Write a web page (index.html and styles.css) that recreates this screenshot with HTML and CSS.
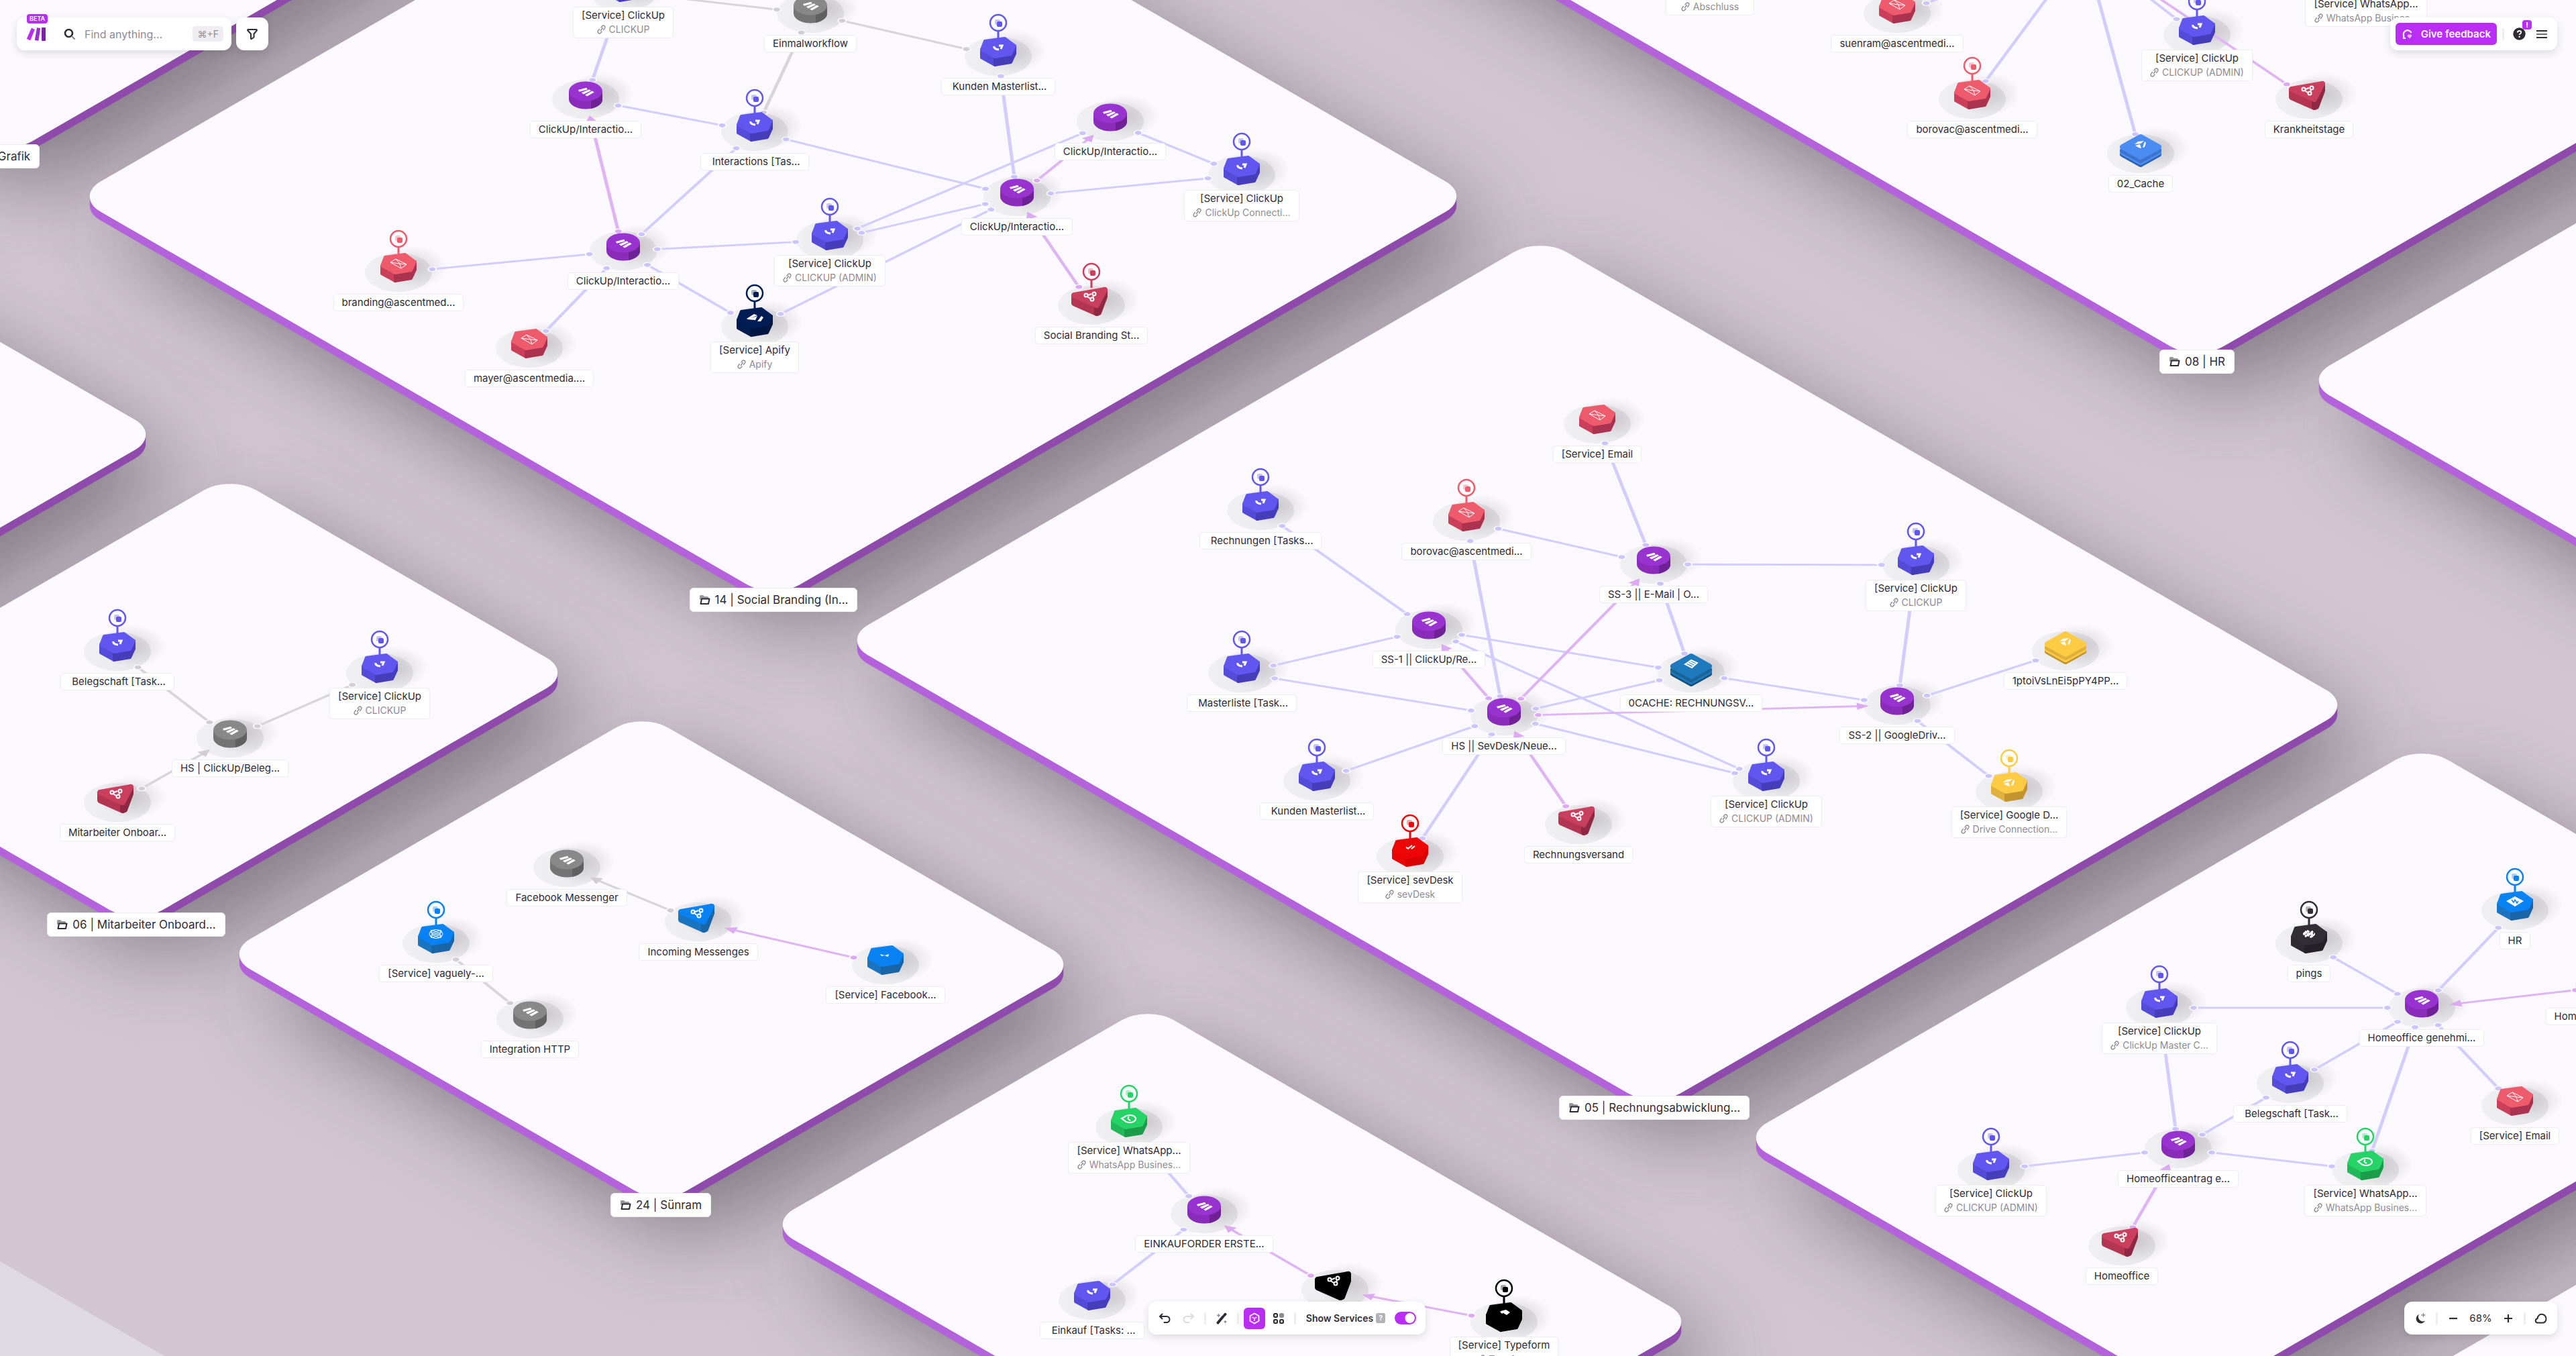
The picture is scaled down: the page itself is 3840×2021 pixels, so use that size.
FILE: index.html
```html
<!DOCTYPE html>
<html lang="en">
<head>
  <meta charset="UTF-8">
  <title>Make Grid</title>
  <link rel="stylesheet" href="styles.css">
</head>
<body>
  <main class="map">
    <svg class="scene" id="scene" aria-hidden="true">
      <defs>
        <filter id="soft" x="-30%" y="-30%" width="160%" height="160%">
          <feGaussianBlur stdDeviation="66"/>
        </filter>
        <radialGradient id="nodeShadow">
          <stop offset="0" stop-color="#55505c" stop-opacity=".22"/>
          <stop offset="1" stop-color="#55505c" stop-opacity="0"/>
        </radialGradient>
        <linearGradient id="disc">
          <stop offset="0" stop-color="#f0eff2"/>
          <stop offset="1" stop-color="#e8e7ea"/>
        </linearGradient>
      </defs>
      <rect class="ground" width="100%" height="100%"/>
      <path class="ground-edge" d="M0 1880L245 2021H0Z"/>
      <g id="shadows"></g>
      <g id="platforms"></g>
      <g id="discs"></g>
      <g id="links"></g>
      <g id="bodies"></g>
    </svg>
    <div id="labels"></div>
  </main>

  <div class="overlay">
    <header class="bar-row">
      <div class="bar-group">
        <div class="panel search">
          <a class="brand" href="#" aria-label="Make">
            <span class="beta">BETA</span>
            <svg width="28" height="20" viewBox="0 0 28 20"><path fill="#b92df5" d="M7 .6l4.900 2.400L5.600 18.400a1 1 0 0 1-1.300.5L.6 17.200a1 1 0 0 1-.4-1.300L7 .6z"/><path fill="#9a2fd0" d="M15 .2l5.200.9-2.700 17.800a1 1 0 0 1-1.200.8l-3.600-.6a1 1 0 0 1-.8-1.200L15 .2z"/><path fill="#7d22ac" d="M22 .8a.8.8 0 0 1 .8-.8H27a1 1 0 0 1 1 1v18a1 1 0 0 1-1 1h-4a1 1 0 0 1-1-1z"/></svg>
          </a>
          <label class="search-icon" for="find">
            <svg width="18" height="18" viewBox="0 0 18 18" fill="none" stroke-linecap="round"><circle cx="7.500" cy="7.500" r="5.500" stroke="#2f2a33" stroke-width="2.600"/><path d="M12.500 12.500L16 16" stroke="#8f8a93" stroke-width="2.400"/></svg>
          </label>
          <input id="find" class="search-input" type="text" placeholder="Find anything..." aria-label="Find anything">
          <kbd class="shortcut">⌘+F</kbd>
        </div>
        <button class="panel filter" type="button" aria-label="Filter">
          <svg width="18" height="18" viewBox="0 0 18 18" fill="none" stroke="#2f2a33" stroke-width="2" stroke-linejoin="round"><path d="M3 2h12c.8 0 1.200.9.700 1.500L11.500 8.500v5L8 16c-.5.300-1 0-1-.5v-7L2.300 3.500C1.800 2.900 2.200 2 3 2z"/></svg>
        </button>
      </div>

      <div class="panel actions">
        <button class="feedback" type="button">
          <svg width="16" height="18" viewBox="0 0 16 18" fill="none"><path d="M5 15H2.200v-3.400A6 6 0 1 1 13.500 7" stroke="#fff" stroke-width="2.200"/><path d="M11 15.500L7.800 12a2 2 0 0 1 3.200-2.200A2 2 0 0 1 14.200 12z" fill="#e7b6fb"/></svg>
          Give feedback
        </button>
        <span class="divider"></span>
        <button class="icon-button help" type="button" aria-label="Help">
          <svg width="19" height="19" viewBox="0 0 19 19"><circle cx="9.500" cy="9.500" r="9.200" fill="#2f2a33"/><path d="M6.800 7.500c.1-1.700 1.200-2.500 2.700-2.500s2.700.9 2.700 2.300c0 1.800-2.600 1.900-2.600 3.700" fill="none" stroke="#fff" stroke-width="1.900"/><circle cx="9.600" cy="13.700" r="1.200" fill="#fff"/></svg>
          <span class="alert">!</span>
        </button>
        <button class="icon-button menu" type="button" aria-label="Menu">
          <svg width="16" height="14" viewBox="0 0 16 14"><path d="M0 2h16M0 12h16" stroke="#2f2a33" stroke-width="2"/><path d="M0 7h16" stroke="#716b75" stroke-width="2"/></svg>
        </button>
      </div>
    </header>

    <footer class="bar-row bar-row-bottom">
      <div class="panel tools">
        <button class="icon-button" type="button" aria-label="Undo">
          <svg width="18" height="18" viewBox="0 0 18 18" fill="none" stroke="#2f2a33" stroke-width="2" stroke-linecap="round" stroke-linejoin="round"><path d="M5.500 2.500L2 6l3.500 3.500"/><path d="M2.500 6H12a4 4 0 0 1 0 9H8.500"/></svg>
        </button>
        <button class="icon-button" type="button" aria-label="Redo" disabled>
          <svg width="18" height="18" viewBox="0 0 18 18" fill="none" stroke="#dcdade" stroke-width="2" stroke-linecap="round" stroke-linejoin="round"><path d="M12.500 2.500L16 6l-3.500 3.500"/><path d="M15.500 6H6a4 4 0 0 0 0 9h3.500"/></svg>
        </button>
        <span class="divider"></span>
        <button class="icon-button" type="button" aria-label="Auto-align">
          <svg width="18" height="18" viewBox="0 0 18 18"><path d="M3.500 15.500L11 6.500" stroke="#2f2a33" stroke-width="4" stroke-linecap="round"/><path d="M13 4.500L14.500 2.800" stroke="#2f2a33" stroke-width="4" stroke-linecap="round"/><path d="M4.500 2v5M2 4.500h5M14.500 12v4M12.500 14h4" stroke="#8f8a93" stroke-width="1.400"/></svg>
        </button>
        <span class="divider"></span>
        <button class="icon-button active" type="button" aria-label="3D view">
          <svg width="18" height="18" viewBox="0 0 18 18" fill="none" stroke="#fff" stroke-width="1.800" stroke-linejoin="round"><path d="M9 1.500l6.500 3.700v7.600L9 16.500l-6.500-3.700V5.200z"/><path d="M5.500 7L9 9l3.500-2M9 9v4" stroke="#eec8fd"/></svg>
        </button>
        <button class="icon-button" type="button" aria-label="2D view">
          <svg width="18" height="18" viewBox="0 0 18 18" fill="none" stroke="#2f2a33" stroke-width="2"><rect x="2" y="2" width="5" height="5" rx="1.500"/><rect x="11" y="2" width="5" height="5" rx="1.500" fill="#8f8a93" stroke="#8f8a93"/><rect x="2" y="11" width="5" height="5" rx="1.500"/><rect x="11" y="11" width="5" height="5" rx="1.500"/></svg>
        </button>
        <span class="divider"></span>
        <label class="switch-label" for="services">Show Services</label>
        <span class="hint">?</span>
        <input id="services" class="switch" type="checkbox" checked>
      </div>

      <div class="panel zoom">
        <button class="icon-button" type="button" aria-label="Dark mode">
          <svg width="18" height="18" viewBox="0 0 18 18"><path d="M7 3a7 7 0 1 0 9 9.500A6.800 6.800 0 0 1 7 3z" fill="#2f2a33"/><path d="M13.500 1v6M10.500 4h6" stroke="#8f8a93" stroke-width="1.400"/></svg>
        </button>
        <span class="divider"></span>
        <button class="icon-button" type="button" aria-label="Zoom out">
          <svg width="14" height="14" viewBox="0 0 14 14"><path d="M1 7h12" stroke="#2f2a33" stroke-width="2.200"/></svg>
        </button>
        <output class="zoom-value">68%</output>
        <button class="icon-button" type="button" aria-label="Zoom in">
          <svg width="14" height="14" viewBox="0 0 14 14"><path d="M1 7h12M7 1v12" stroke="#2f2a33" stroke-width="2.200"/></svg>
        </button>
        <span class="divider"></span>
        <button class="icon-button" type="button" aria-label="Shape">
          <svg width="20" height="18" viewBox="0 0 20 18" fill="none" stroke="#2f2a33" stroke-width="2"><path d="M5 15.500c-4 0-4.500-5.500-.5-6.300C5 4.500 8.500 2 12.500 3c4 1 5.500 5 4.800 8-.7 3-2.300 4.500-5.300 4.500z"/></svg>
        </button>
      </div>
    </footer>
  </div>
  <script src="map.js"></script>
</body>
</html>
```
FILE: styles.css
```css
* {
  box-sizing: border-box;
}
body {
  margin: 0;
  font-family: Inter, "Liberation Sans", sans-serif;
  color: #2f2a33;
  overflow: hidden;
}
button {
  font: inherit;
  color: inherit;
  border: none;
  background: none;
  padding: 0;
  cursor: pointer;
}

/* map */
.map {
  position: relative;
  height: 100vh;
  overflow: hidden;
}
.scene {
  display: block;
  width: 100%;
  height: 100%;
}
.ground {
  fill: #d1c6d1;
}
.ground-edge {
  fill: #dfd9e2;
}
.shadow {
  fill: #3c3742;
  opacity: 0.54;
}
.platform-left {
  fill: #b362db;
}
.platform-right {
  fill: #8f4bab;
}
.platform-face {
  fill: #fbf9fd;
}
.link {
  stroke: #d3cdfd;
  stroke-width: 5px;
}
.link-dot {
  fill: #ccc5fb;
  stroke: #fbf9fd;
  stroke-width: 2px;
}
.link.trigger {
  stroke: #dfb4f2;
}
.link-dot.trigger,
.link-arrow.trigger {
  fill: #dcaaf1;
}
.link.idle {
  stroke: #d7d5d9;
}
.link-dot.idle,
.link-arrow.idle {
  fill: #d0ced3;
}
.glyph {
  fill: none;
  stroke: #fff;
  stroke-width: 2px;
}
.glyph-thin {
  stroke-width: 1px;
}
.glyph-bold {
  stroke-width: 3px;
}
.glyph-solid {
  fill: #fff;
}

/* labels on the canvas */
.anchor {
  position: absolute;
  width: 280px;
  height: 60px;
  margin: -30px 0 0 -140px;
  display: grid;
  place-items: center;
}
.label {
  display: flex;
  flex-direction: column;
  align-items: center;
  gap: 1px;
  padding: 2px 12px;
  border: 1px solid #ededf0;
  border-radius: 5px;
  background: #fff;
  font-size: 15px;
  line-height: 20px;
  white-space: pre;
}
.label-sub {
  display: flex;
  align-items: center;
  gap: 5px;
  font-size: 14px;
  color: #8f8a93;
}
.folder {
  display: flex;
  align-items: center;
  gap: 7px;
  padding: 5px 13px;
  border: 1px solid #ededf0;
  border-radius: 6px;
  background: #fff;
  font-size: 17px;
  line-height: 24px;
  white-space: pre;
}

/* toolbars */
.overlay {
  position: absolute;
  inset: 0;
  display: flex;
  flex-direction: column;
  justify-content: space-between;
  padding: 26px 28px 32px 25px;
}
.bar-row {
  display: flex;
  justify-content: space-between;
}
.bar-row-bottom {
  display: grid;
  grid-template-columns: 1fr auto 1fr;
}
.bar-group {
  display: flex;
  gap: 7px;
}
.panel {
  display: flex;
  align-items: center;
  height: 49px;
  border-radius: 12px;
  background: #fff;
  box-shadow: 0 4px 12px rgba(47, 42, 51, 0.14);
}
.search {
  width: 320px;
  padding: 0 12px 0 15px;
}
.brand {
  position: relative;
  display: flex;
  width: 28px;
}
.beta {
  position: absolute;
  left: 0;
  bottom: 26px;
  padding: 0 4px;
  border-radius: 4px;
  background: #b92df5;
  color: #fff;
  font-size: 9px;
  font-weight: 600;
  line-height: 14px;
}
.search-icon {
  display: flex;
  margin: 0 13px 0 27px;
}
.search-input {
  flex: 1;
  min-width: 0;
  border: none;
  outline: none;
  padding: 0;
  font: inherit;
  font-size: 16px;
  color: #2f2a33;
}
.search-input::placeholder {
  color: #8f8a93;
  opacity: 1;
}
.shortcut {
  padding: 0 7px;
  border-radius: 5px;
  background: #efedf1;
  color: #8f8a93;
  font-family: inherit;
  font-size: 14px;
  line-height: 23px;
}
.filter {
  width: 48px;
  justify-content: center;
}
.actions {
  padding: 0 15px 0 8px;
  gap: 8px;
}
.feedback {
  display: flex;
  align-items: center;
  gap: 12px;
  height: 33px;
  padding: 0 9px 0 10px;
  border-radius: 6px;
  background: #b92df5;
  color: #fff;
  font-size: 15px;
  font-weight: 600;
}
.divider {
  width: 3px;
  height: 18px;
  border-radius: 2px;
  background: #eeecef;
}
.icon-button {
  position: relative;
  display: flex;
  align-items: center;
  justify-content: center;
  width: 32px;
  height: 32px;
  border-radius: 6px;
}
.help {
  width: 28px;
}
.menu {
  width: 16px;
  margin-left: 4px;
}
.alert {
  position: absolute;
  right: -5px;
  top: -5px;
  width: 14px;
  border-radius: 4px;
  background: #b92df5;
  color: #fff;
  font-size: 11px;
  font-weight: 700;
  line-height: 14px;
}
.tools {
  grid-column: 2;
  padding: 0 14px 0 8px;
  gap: 4px;
}
.tools .divider {
  margin: 0 3px;
}
.active {
  background: #b92df5;
}
.switch-label {
  margin-left: 8px;
  font-size: 14px;
  font-weight: 600;
}
.hint {
  width: 14px;
  border-radius: 3px;
  background: #b4b1b7;
  color: #fff;
  font-size: 11px;
  font-weight: 600;
  line-height: 15px;
  text-align: center;
}
.switch {
  appearance: none;
  width: 32px;
  height: 19px;
  margin: 0 0 0 10px;
  border: 2px solid #b92df5;
  border-radius: 10px;
  background: radial-gradient(circle at 21px 50%, #fff 7px, #b92df5 8px);
}
.zoom {
  grid-column: 3;
  justify-self: end;
  padding: 0 8px;
  gap: 7px;
}
.zoom-value {
  width: 36px;
  font-size: 15px;
  text-align: center;
}
```
FILE: map.js
```js
const RATIO = 0.577; // vertical squash of the isometric plane
const CORNER = 55;
const DEPTH = 13;

// corners: top, right, bottom, left
const platforms = [
  [[9, -575], [709, -171], [9, 233], [-691, -171]],
  [[3275, -1077], [4675, -269], [3275, 539], [1875, -269]],
  [[1153, -308], [2194, 293], [1153, 894], [111, 293]],
  [[-460, 244], [240, 648], [-460, 1052], [-1160, 648]],
  [[4334, 48], [5234, 567], [4334, 1086], [3434, 567]],
  [[2296, 353], [3507, 1051], [2466, 1652], [1255, 954]],
  [[343, 708], [854, 1003], [203, 1379], [-308, 1084]],
  [[957, 1062], [1608, 1438], [985, 1797], [334, 1422]],
  [[3610, 1110], [4288, 1502], [3273, 2088], [2595, 1696]],
  [[1711, 1498], [2529, 1970], [1962, 2297], [1144, 1825]],
  [[4400, 1592], [5400, 2169], [4400, 2746], [3400, 2169]]
];

const folders = [
  [9, 233, 'Grafik'],
  [3275, 539, '08 | HR'],
  [1153, 894, '14 | Social Branding (In...'],
  [203, 1378, '06 | Mitarbeiter Onboard...'],
  [985, 1796, '24 | Sünram'],
  [2464, 1651, '05 | Rechnungsabwicklung...']
];

// type: [shape, glyph, top, side, dark side]
const types = {
  make: ['cylinder', 'make', '#9933cf', '#8a2bba', '#6f2296'],
  idle: ['cylinder', 'make', '#888888', '#747474', '#606060'],
  clickup: ['hexagon', 'clickup', '#6157f0', '#544bd9', '#463dbb'],
  email: ['hexagon', 'email', '#ee5b6d', '#cb3f5a', '#ac3350'],
  apify: ['hexagon', 'apify', '#001c54', '#001b50', '#001540'],
  sevdesk: ['hexagon', 'sevdesk', '#ee0606', '#ea0404', '#d80303'],
  whatsapp: ['hexagon', 'whatsapp', '#25d366', '#20b859', '#1a9c4b'],
  gdrive: ['hexagon', 'drive', '#fecb45', '#dfb03c', '#c29530'],
  http: ['hexagon', 'globe', '#0982f4', '#1a74bf', '#1865a8'],
  facebook: ['hexagon', 'messenger', '#0982f4', '#1a74bf', '#1865a8'],
  hr: ['hexagon', 'code', '#0982f4', '#1a74bf', '#1865a8'],
  slack: ['hexagon', 'flower', '#322d35', '#2f2a32', '#242027'],
  typeform: ['hexagon', 'typeform', '#000000', '#000000', '#000000'],
  hook: ['triangle', 'hook', '#ca3f5e', '#b33552', '#8f2943'],
  hookBlue: ['triangle', 'hook', '#0982f4', '#1a74bf', '#1865a8'],
  hookBlack: ['triangle', 'hook', '#000000', '#000000', '#000000'],
  cacheBlue: ['stack', 'drive', '#4b8cf2', '#3c74cd', '#2f62b3'],
  cacheYellow: ['stack', 'drive', '#fecb45', '#dfb03c', '#c29530'],
  store: ['stack', 'store', '#1f79bd', '#196499', '#14507c']
};

// id: [x, y, type, text, connection, pinned]
const nodes = {
  a1: [929, -12, 'clickup', '[Service] ClickUp', 'CLICKUP', 1],
  a2: [1208, 20, 'idle', 'Einmalworkflow'],
  a3: [873, 148, 'make', 'ClickUp/Interactio...'],
  a4: [1125, 196, 'clickup', ' Interactions [Tas...', '', 1],
  a5: [929, 374, 'make', 'ClickUp/Interactio...'],
  a6: [1237, 358, 'clickup', '[Service] ClickUp', 'CLICKUP (ADMIN)', 1],
  a7: [594, 406, 'email', 'branding@ascentmed...', '', 1],
  a8: [789, 519, 'email', 'mayer@ascentmedia....'],
  a9: [1125, 487, 'apify', '[Service] Apify', 'Apify', 1],
  b1: [1488, 84, 'clickup', ' Kunden Masterlist...', '', 1],
  b2: [1655, 181, 'make', 'ClickUp/Interactio...'],
  b3: [1516, 293, 'make', 'ClickUp/Interactio...'],
  b4: [1851, 261, 'clickup', '[Service] ClickUp', 'ClickUp Connecti...', 1],
  b5: [1627, 455, 'hook', 'Social Branding St...', '', 1],
  hub: [3107, -78, 'make', ''],
  c1: [2549, -46, 'email', '[Service] Email', 'Abschluss'],
  c2: [2828, 20, 'email', 'suenram@ascentmedi...'],
  c3: [2940, 148, 'email', 'borovac@ascentmedi...', '', 1],
  c4: [3191, 229, 'cacheBlue', '02_Cache'],
  c5: [3275, 52, 'clickup', '[Service] ClickUp', 'CLICKUP (ADMIN)', 1],
  c6: [3442, 148, 'hook', 'Krankheitstage'],
  c7: [3527, -29, 'whatsapp', '[Service] WhatsApp...', 'WhatsApp Busines...'],
  d1: [175, 971, 'clickup', ' Belegschaft [Task...', '', 1],
  d2: [566, 1003, 'clickup', '[Service] ClickUp', 'CLICKUP', 1],
  d3: [343, 1100, 'idle', 'HS | ClickUp/Beleg...'],
  d4: [175, 1196, 'hook', 'Mitarbeiter Onboar...'],
  d5: [845, 1293, 'idle', 'Facebook Messenger'],
  e1: [650, 1406, 'http', '[Service] vaguely-...', '', 1],
  e2: [790, 1519, 'idle', 'Integration HTTP'],
  e3: [1041, 1374, 'hookBlue', 'Incoming Messenges'],
  e4: [1320, 1438, 'facebook', '[Service] Facebook...'],
  f1: [1683, 1680, 'whatsapp', '[Service] WhatsApp...', 'WhatsApp Busines...', 1],
  f2: [1795, 1809, 'make', 'EINKAUFORDER ERSTE...'],
  f3: [1628, 1938, 'clickup', ' Einkauf [Tasks: ...'],
  f4: [1990, 1922, 'hookBlack', ''],
  f5: [2242, 1970, 'typeform', '[Service] Typeform', 'Typeform', 1],
  g1: [2381, 632, 'email', '[Service] Email'],
  g2: [1879, 761, 'clickup', ' Rechnungen [Tasks...', '', 1],
  g3: [2186, 777, 'email', 'borovac@ascentmedi...', '', 1],
  g4: [2465, 841, 'make', 'SS-3 || E-Mail | O...'],
  g5: [2130, 938, 'make', 'SS-1 || ClickUp/Re...'],
  g6: [1851, 1003, 'clickup', ' Masterliste [Task...', '', 1],
  g7: [2242, 1067, 'make', 'HS || SevDesk/Neue...'],
  g8: [1963, 1164, 'clickup', ' Kunden Masterlist...', '', 1],
  g9: [2102, 1277, 'sevdesk', '[Service] sevDesk', 'sevDesk', 1],
  g10: [2353, 1229, 'hook', 'Rechnungsversand'],
  g11: [2856, 842, 'clickup', '[Service] ClickUp', 'CLICKUP', 1],
  g12: [2521, 1003, 'store', '0CACHE: RECHNUNGSV...'],
  g13: [2828, 1051, 'make', 'SS-2 || GoogleDriv...'],
  g14: [2633, 1164, 'clickup', '[Service] ClickUp', 'CLICKUP (ADMIN)', 1],
  g15: [3079, 970, 'cacheYellow', '1ptoiVsLnEi5pPY4PP...'],
  g16: [2995, 1180, 'gdrive', '[Service] Google D...', 'Drive Connection...', 1],
  h1: [3749, 1357, 'hr', 'HR', '', 1],
  h2: [3442, 1406, 'slack', 'pings', '', 1],
  h3: [3219, 1502, 'clickup', '[Service] ClickUp', 'ClickUp Master C...', 1],
  h4: [3610, 1502, 'make', 'Homeoffice genehmi...'],
  h5: [3414, 1615, 'clickup', ' Belegschaft [Task...', '', 1],
  h6: [3749, 1648, 'email', '[Service] Email'],
  h7: [3247, 1712, 'make', 'Homeofficeantrag e...'],
  h8: [2968, 1744, 'clickup', '[Service] ClickUp', 'CLICKUP (ADMIN)', 1],
  h9: [3526, 1744, 'whatsapp', '[Service] WhatsApp...', 'WhatsApp Busines...', 1],
  h10: [3163, 1857, 'hook', 'Homeoffice'],
  h11: [3889, 1470, 'hook', 'Homeoffice Genehmi...']
};

// "-" plain data link, ">" arrow at the second node, "~" inactive
const links = `
a1-a3 a1~a2 a2~b1 a2~a4 a3-a4 a5>a3 a5-a4 a5-a7 a5-a8 a5-a9 a5-a6 a4-b3
a6-b2 a6-b3 b3-a9 b3>b2 b1-b3 b2-b4 b3-b4 b5>b3
c2-hub c3-hub c4-hub c5-hub c6>hub
d1~d3 d2~d3 d4~>d3 e3~>d5 e1~e2 e4>e3
f1-f2 f3-f2 f4>f2 f5>f4
g1-g4 g3-g4 g3-g7 g2-g5 g6-g5 g6-g7 g5-g12 g5-g14 g4-g11 g4-g12 g7>g5 g7>g4
g7-g12 g7>g13 g7-g14 g7-g8 g7-g9 g10>g7 g12-g13 g11-g13 g13-g15 g13-g16
h2-h4 h1-h4 h3-h4 h4-h5 h4-h9 h4-h6 h3-h7 h5-h7 h7-h8 h7-h9 h10>h7 h11>h4
`.trim().split(/\s+/);

const glyphs = {
  make: '<path class="glyph-solid" transform="matrix(.53 .3 -.53 .3 -2 -19)" d="M6 0l6 3L6 20 0 17zM14 0l6 1-2 19-7-1zM22 0h6v20h-6z"/>',
  clickup: '<path class="glyph glyph-bold" d="M-6 -15q-1 4 7 5M1 -16h5l-2 5"/>',
  email: '<path class="glyph glyph-thin" d="M-12 -15L-4 -20 12 -12 4 -6zM-12 -15L2 -13 12 -12M2 -13L4 -6M2 -13L-4 -20"/>',
  apify: '<path class="glyph-solid" d="M-12 -12L-1 -19l5 2-14 6zM-11 -11L4 -16l-3 6zM4 -8l6-8 3 2-4 6z"/>',
  sevdesk: '<path class="glyph" d="M-6 -14l4 2M-2 -13l5-4M2 -12l5-4"/>',
  whatsapp: '<path class="glyph" d="M-11 -13l4-2a9 5.500 0 1 1 0 5zM0 -16q-4 3 2 6"/>',
  drive: '<path class="glyph-solid" d="M-9 -14l5-4 9-1-5 4zM-8 -12l7-2 2 6-4-1zM3 -9l3-9 2 2-2 6z"/>',
  globe: '<g class="glyph glyph-thin"><ellipse cx="0" cy="-14" rx="10" ry="6.500"/><ellipse cx="0" cy="-14" rx="9" ry="3" transform="rotate(30 0 -14)"/><ellipse cx="0" cy="-14" rx="9" ry="3" transform="rotate(-30 0 -14)"/><path d="M-8 -18L8 -10M-8 -10L8 -18"/></g>',
  messenger: '<path class="glyph-solid" d="M-8 -16l7 2 6-2-1 4-6-2-4 1z"/>',
  code: '<path class="glyph-solid" d="M-13 -14l13-7 13 7-13 8z"/><path d="M-5 -16l3 4 2-4 3 5 2-3" fill="none" stroke="#0982f4" stroke-width="1.500"/>',
  flower: '<path class="glyph glyph-bold" stroke-dasharray="4 1.500" d="M-9 -14H9M-6 -18L6 -10M6 -18L-6 -10M-3 -19L8 -12M-8 -16L4 -9"/>',
  typeform: '<path class="glyph-solid" d="M-6 -15l4-2 3 2-4 3zM-1 -17l4-1 6 4-5 4-5-3z"/>',
  hook: '<g class="glyph"><circle cx="-8" cy="-15" r="2.500"/><circle cx="4" cy="-17" r="2.500"/><circle cx="1" cy="-9" r="2.500"/><path d="M-5 -15l5-2M3 -14l-1 3M-6 -13l4 3"/></g>',
  store: '<g class="glyph"><path d="M-9 -13l9-6 9 4-8 7zM-6 -15l9 4M-3 -17l9 4"/></g>'
};

function poly(points, fill, dy = 0, round = 4) {
  const ring = points.map(p => p[0] + ',' + (p[1] + dy)).join(' ');
  return `<polygon points="${ring}" fill="${fill}" stroke="${fill}" stroke-width="${round}" stroke-linejoin="round"/>`;
}

const shapes = {
  cylinder(top, side, dark) {
    return `<path d="M-25 -12v12a25 14.500 0 0 0 50 0v-12z" fill="${side}"/>
      <path d="M8 -5v19A25 14.500 0 0 0 25 0v-12z" fill="${dark}"/>
      <ellipse cy="-12" rx="25" ry="14.500" fill="${top}"/>`;
  },
  hexagon(top, side, dark) {
    const face = [[10, -27], [-20, -23], [-25, -10], [-5, 1], [19, -3], [25, -16]];
    return poly([[-25, -10], [-5, 1], [-5, 13], [-25, 2]], side) +
      poly([[-5, 1], [19, -3], [25, -16], [25, -4], [19, 9], [-5, 13]], dark) +
      poly(face, top);
  },
  triangle(top, side, dark) {
    return poly([[-26, -14], [8, 0], [8, 12], [-26, -3]], side, 0, 8) +
      poly([[8, 0], [20, -23], [20, -13], [11, 11], [8, 12]], dark, 0, 8) +
      poly([[-26, -15], [20, -23], [8, 0]], top, 0, 8);
  },
  stack(top, side, dark) {
    const face = [[0, -25], [27, -10], [0, 5], [-27, -10]];
    return poly(face, dark, 11, 8) + poly(face, top, 8, 8) + poly(face, side, 5, 8) + poly(face, top, 0, 8);
  }
};

function pin(color) {
  return `<path d="M0 -38v12" stroke="${color}" stroke-width="3"/>
    <circle cy="-50" r="12" fill="#fff" stroke="${color}" stroke-width="2.500"/>
    <rect x="-5" y="-55" width="8" height="8" rx="2" fill="${color}" opacity=".35"/>
    <rect x="-2" y="-52" width="8" height="8" rx="2" fill="${color}"/>`;
}

function drawPlatform([t, r, b, l]) {
  const ex = CORNER * 0.707, ey = CORNER * 0.408;
  const tipX = CORNER * 0.414, tipY = CORNER * 0.239;
  const arc = sweep => `A${CORNER} ${CORNER * RATIO} 0 0 ${sweep} `;
  const face = `M${t[0] - ex} ${t[1] + ey}${arc(1)}${t[0] + ex} ${t[1] + ey}
    L${r[0] - ex} ${r[1] - ey}${arc(1)}${r[0] - ex} ${r[1] + ey}
    L${b[0] + ex} ${b[1] - ey}${arc(1)}${b[0] - ex} ${b[1] - ey}
    L${l[0] + ex} ${l[1] + ey}${arc(1)}${l[0] + ex} ${l[1] - ey}Z`;
  // side wall from a left (s = 1) or right (s = -1) tip down to the bottom corner
  const wall = (c, s) => `M${c[0] + s * tipX} ${c[1]}${arc(s > 0 ? 0 : 1)}${c[0] + s * ex} ${c[1] + ey}
    L${b[0] - s * ex} ${b[1] - ey}${arc(s > 0 ? 0 : 1)}${b[0]} ${b[1] - tipY}v${DEPTH}
    ${arc(s > 0 ? 1 : 0)}${b[0] - s * ex} ${b[1] - ey + DEPTH}
    L${c[0] + s * ex} ${c[1] + ey + DEPTH}${arc(s > 0 ? 1 : 0)}${c[0] + s * tipX} ${c[1] + DEPTH}Z`;
  document.getElementById('shadows').innerHTML +=
    `<path class="shadow" filter="url(#soft)" transform="translate(44 56)" d="${face}"/>`;
  document.getElementById('platforms').innerHTML +=
    `<path class="platform-left" d="${wall(l, 1)}"/>
     <path class="platform-right" d="${wall(r, -1)}"/>
     <path class="platform-face" d="${face}"/>`;
}

function drawLink(text) {
  const [, from, mark, to] = text.match(/(\w+?)([-~>]+)(\w+)/);
  const kind = mark.includes('~') ? 'idle' : mark === '>' ? 'trigger' : 'data';
  const arrow = mark.includes('>');
  const x1 = nodes[from][0], y1 = nodes[from][1] / RATIO;
  const x2 = nodes[to][0], y2 = nodes[to][1] / RATIO;
  const len = Math.hypot(x2 - x1, y2 - y1);
  const ux = (x2 - x1) / len, uy = (y2 - y1) / len;
  const ax = x1 + ux * 51, ay = y1 + uy * 51;
  const gap = arrow ? 56 : 51;
  const bx = x2 - ux * gap, by = y2 - uy * gap;
  let end = `<circle class="link-dot ${kind}" cx="${bx}" cy="${by}" r="6"/>`;
  if (arrow) {
    const tip = [x2 - ux * 42, y2 - uy * 42];
    const base = [x2 - ux * 60, y2 - uy * 60];
    end = `<polygon class="link-arrow ${kind}" points="${tip} ${base[0] - uy * 9},${base[1] + ux * 9} ${base[0] + uy * 9},${base[1] - ux * 9}"/>`;
  }
  return `<line class="link ${kind}" x1="${ax}" y1="${ay}" x2="${bx}" y2="${by}"/>
    <circle class="link-dot ${kind}" cx="${ax}" cy="${ay}" r="6"/>${end}`;
}

const chain = '<svg width="13" height="14" viewBox="0 0 13 14" fill="none" stroke="#8f8a93" stroke-width="1.400" stroke-linecap="round"><path d="M5.500 8.500L8.500 4.500M6 4l1.800-2.200a2.400 2.400 0 0 1 3.700 3L9.500 7.500M7 10l-1.800 2.200a2.400 2.400 0 0 1-3.700-3L3.500 6.500"/></svg>';
const folderIcon = '<svg width="17" height="16" viewBox="0 0 17 16"><path d="M1 8V2.500A1.500 1.500 0 0 1 2.500 1H6l2 2h4.500A1.500 1.500 0 0 1 14 4.500V6" fill="#9b969e"/><path d="M4 6.500h11.500L14 14H2.500z" fill="#fff" stroke="#2f2a33" stroke-width="2" stroke-linejoin="round"/></svg>';

platforms.forEach(drawPlatform);

let discs = '', bodies = '', labels = '';
Object.values(nodes).forEach(([x, y, type, text, sub, pinned]) => {
  const [shape, glyph, top, side, dark] = types[type];
  discs += `<g transform="translate(${x} ${y})"><ellipse rx="50" ry="29" fill="url(#disc)"/>
    <ellipse cx="22" cy="-8" rx="50" ry="32" fill="url(#nodeShadow)"/></g>`;
  bodies += `<g transform="translate(${x} ${y})">${pinned ? pin(top) : ''}${shapes[shape](top, side, dark)}${glyphs[glyph]}</g>`;
  if (text) {
    labels += `<div class="anchor" style="left:${x}px;top:${y + 45}px"><div class="label"><span>${text}</span>` +
      (sub ? `<span class="label-sub">${chain}${sub}</span>` : '') + '</div></div>';
  }
});
folders.forEach(([x, y, text]) => {
  labels += `<div class="anchor" style="left:${x}px;top:${y}px"><div class="folder">${folderIcon}<span>${text}</span></div></div>`;
});

document.getElementById('discs').innerHTML = discs;
document.getElementById('links').innerHTML = `<g transform="scale(1 ${RATIO})">${links.map(drawLink).join('')}</g>`;
document.getElementById('bodies').innerHTML = bodies;
document.getElementById('labels').innerHTML = labels;
```
